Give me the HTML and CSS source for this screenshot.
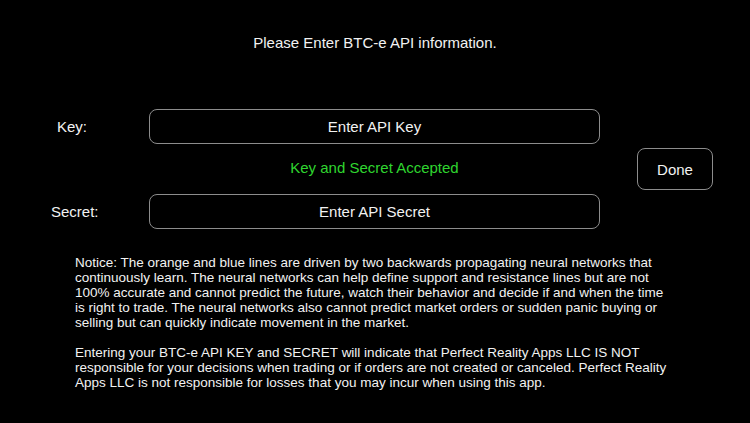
FILE: index.html
```html
<!DOCTYPE html>
<html lang="en">
<head>
  <meta charset="UTF-8">
  <meta name="viewport" content="width=device-width, initial-scale=1.0">
  <title>BTC-e API</title>
  <link rel="stylesheet" href="styles.css">
</head>
<body>
  <div class="screen">
    <h1 class="title">Please Enter BTC-e API information.</h1>
    <div class="form">
      <label class="label label-key" for="apiKey">Key:</label>
      <input class="field field-key" type="text" id="apiKey" placeholder="Enter API Key">
      <p class="status">Key and Secret Accepted</p>
      <button class="done">Done</button>
      <label class="label label-secret" for="apiSecret">Secret:</label>
      <input class="field field-secret" type="text" id="apiSecret" placeholder="Enter API Secret">
    </div>
    <div class="notice">
      <p>Notice: The orange and blue lines are driven by two backwards propagating neural networks that continuously learn. The neural networks can help define support and resistance lines but are not 100% accurate and cannot predict the future, watch their behavior and decide if and when the time is right to trade. The neural networks also cannot predict market orders or sudden panic buying or selling but can quickly indicate movement in the market.</p>
      <p>Entering your BTC-e API KEY and SECRET will indicate that Perfect Reality Apps LLC IS NOT responsible for your decisions when trading or if orders are not created or canceled. Perfect Reality Apps LLC is not responsible for losses that you may incur when using this app.</p>
    </div>
  </div>
</body>
</html>
```

FILE: styles.css
```css
body {
  margin: 0;
  padding: 0;
  background-color: #000;
  color: #f2f2f2;
  font-family: 'Liberation Sans', Arial, sans-serif;
}
.screen {
  width: 750px;
  height: 423px;
  overflow: hidden;
}
.title {
  margin: 0;
  padding-top: 34px;
  font-size: 15px;
  font-weight: normal;
  line-height: 17px;
  text-align: center;
}
.form {
  display: grid;
  grid-template-columns: 149px 451px 37px 76px;
  grid-template-rows: 35px 50px 35px;
  margin-top: 58px;
  align-items: center;
}
.label {
  font-size: 15px;
  grid-column: 1;
}
.label-key {
  grid-row: 1;
  padding-left: 57px;
}
.label-secret {
  grid-row: 3;
  padding-left: 51px;
}
.field {
  grid-column: 2;
  box-sizing: border-box;
  width: 100%;
  height: 35px;
  background: transparent;
  border: 1px solid #8c8c8c;
  border-radius: 8px;
  color: #f2f2f2;
  font-family: inherit;
  font-size: 15px;
  text-align: center;
  outline: none;
}
.field::placeholder {
  color: #f2f2f2;
  opacity: 1;
}
.field-key {
  grid-row: 1;
}
.field-secret {
  grid-row: 3;
}
.status {
  grid-column: 2;
  grid-row: 2;
  margin: 0 0 3px;
  color: #2fd52f;
  font-size: 15px;
  text-align: center;
}
.done {
  grid-column: 4;
  grid-row: 1 / 4;
  height: 42px;
  background: transparent;
  border: 1px solid #8c8c8c;
  border-radius: 8px;
  color: #f2f2f2;
  font-family: inherit;
  font-size: 15px;
  cursor: pointer;
}
.notice {
  width: 595px;
  margin: 26px 0 0 75px;
  font-size: 13.5px;
  line-height: 15px;
}
.notice p {
  margin: 0 0 15px;
}
```
